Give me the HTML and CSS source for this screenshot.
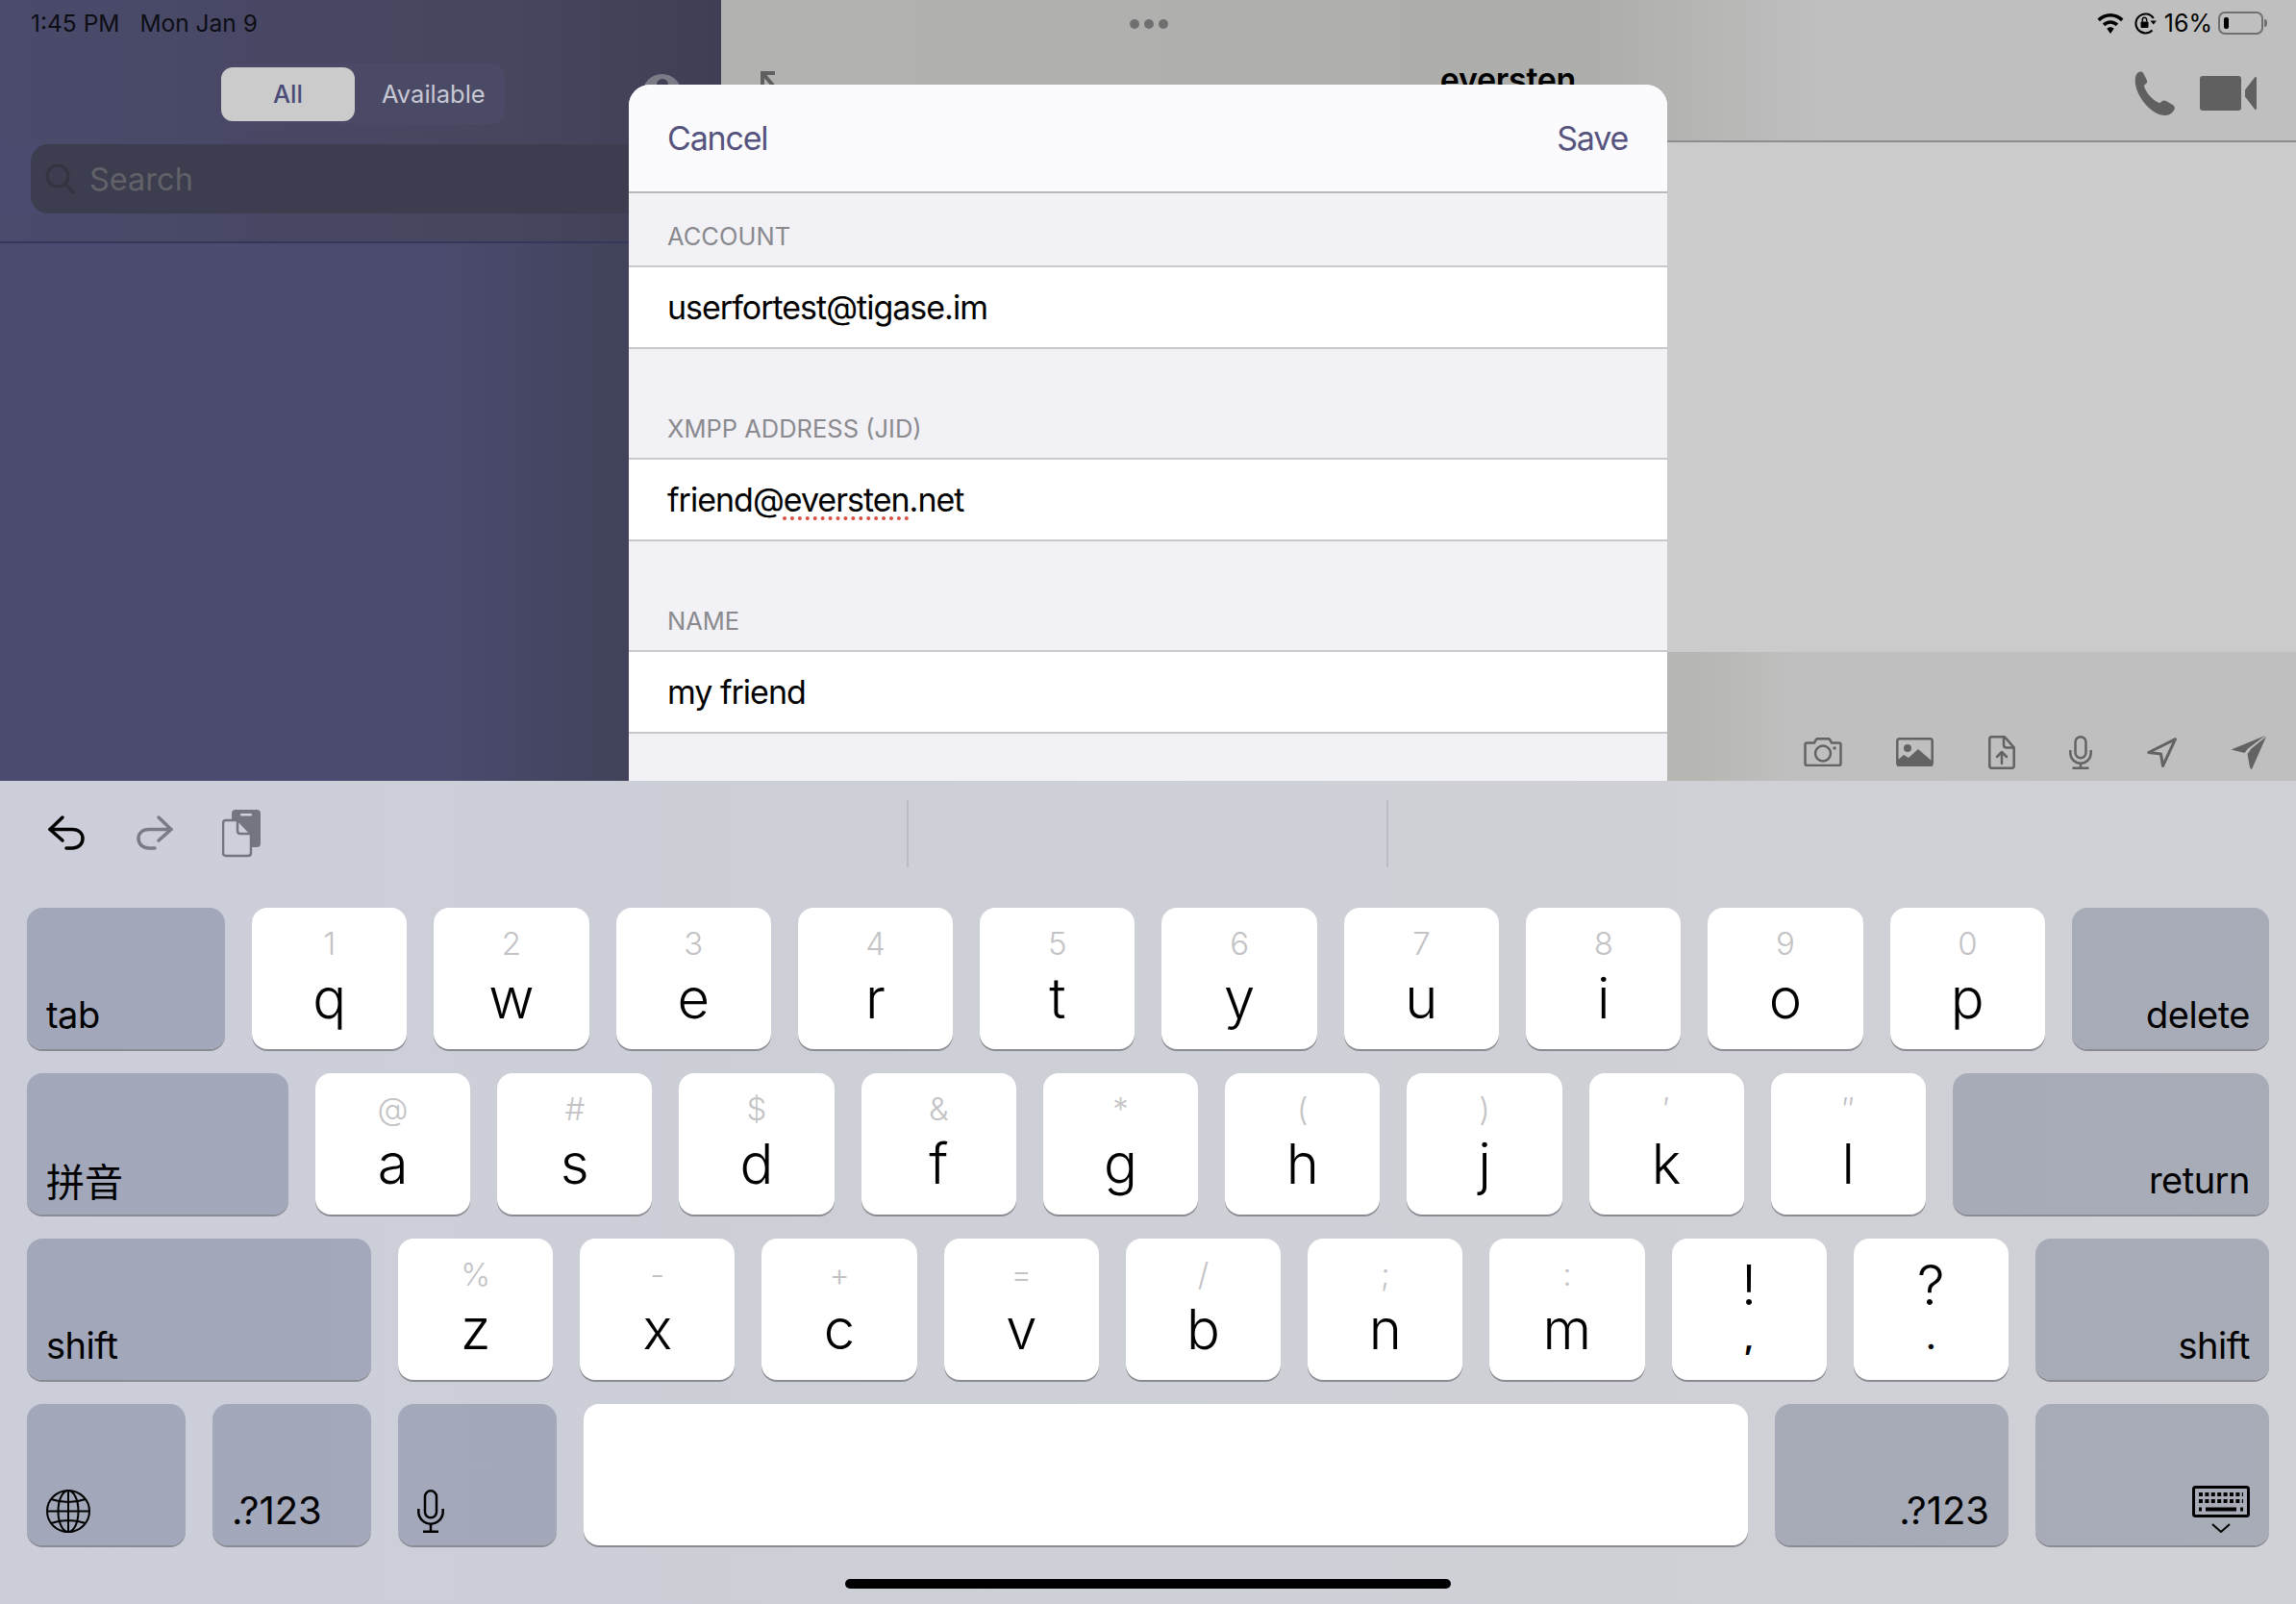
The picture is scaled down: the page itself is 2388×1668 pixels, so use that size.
FILE: index.html
```html
<!DOCTYPE html>
<html lang="en">
  <head>
    <meta charset="UTF-8" />
    <title>Add contact</title>
    <link rel="stylesheet" href="styles.css">
  </head>

  <body>
    <div class="app">
      <aside class="sidebar">
        <div class="status status-left">
          <span>1:45 PM</span>
          <span>Mon Jan 9</span>
        </div>
        <div class="segments">
          <div class="segment-track">
            <span class="segment active">All</span>
            <span class="segment">Available</span>
          </div>
        </div>
        <div class="add-btn"><i></i></div>
        <div class="search">
          <svg width="32" height="32" viewBox="0 0 32 32" fill="none" stroke="#33343f" stroke-width="3">
            <circle cx="13" cy="13" r="11" />
            <path d="M21 21l9 10" stroke-linecap="round" />
          </svg>
          <span>Search</span>
        </div>
        <div class="sidebar-line"></div>
      </aside>

      <main class="chat">
        <div class="status status-right">
          <div class="dots"><i></i><i></i><i></i></div>
          <div class="status-icons">
            <svg width="28" height="21" viewBox="0 0 28 21" fill="#000">
              <path d="M14 0C8.800 0 4 2.100 0.500 5.600L3 8.200C5.900 5.300 9.800 3.600 14 3.600s8.100 1.700 11 4.600l2.500-2.600C24 2.100 19.200 0 14 0z" />
              <path d="M14 7.200c-3.200 0-6.100 1.300-8.200 3.400l2.600 2.600c1.400-1.500 3.400-2.400 5.600-2.400s4.200 0.900 5.600 2.400l2.600-2.600C20.100 8.500 17.200 7.200 14 7.200z" />
              <path d="M14 14.300c-1.500 0-2.800 0.600-3.700 1.500L14 21l3.700-5.200c-0.900-0.900-2.200-1.500-3.700-1.500z" />
            </svg>
            <svg width="25" height="24" viewBox="0 0 25 24" fill="none" stroke="#000" stroke-width="2">
              <path d="M19.500 19.500A10 10 0 1 1 20.800 7" />
              <path d="M24 9.500h-6.500l3.200 4z" fill="#000" stroke="none" />
              <rect x="7.500" y="10.500" width="8" height="6.500" rx="1" fill="#000" stroke="none" />
              <path d="M9.300 10.500V8.500a2.200 2.200 0 0 1 4.400 0v2" stroke-width="1.500" />
            </svg>
            <span class="percent">16%</span>
            <div class="battery"><i></i></div>
            <div class="battery-tip"></div>
          </div>
        </div>

        <div class="chat-nav">
          <svg class="back" width="24" height="24" viewBox="0 0 24 24" fill="none" stroke="#5f5f5f" stroke-width="4">
            <path d="M3 16V2h13M3 2l18 21" />
          </svg>
          <div class="title">eversten</div>
          <div class="nav-icons">
            <svg width="47" height="46" viewBox="0 0 43 45" fill="#606060">
              <path d="M3 1.500c2-1.500 4.500-1.500 5.500 0.500l3.500 7c0.700 1.500 0.300 3-1 4l-2 1.800c1.500 4 3.500 7.500 6.500 10.800 3 3.200 6 5.500 9.700 7l2.300-2c1.200-1 2.800-1.200 4.200-0.300l7 4.300c2 1.200 2.200 3.800 0.600 5.800-2 2.600-5 4.800-8.800 4.600C24 45 17 41 10.500 33.500 4 26 0.500 17.500 0.200 10.500 0 6.500 1 3.300 3 1.500z" />
            </svg>
            <svg width="59" height="36" viewBox="0 0 59 36" fill="#606060">
              <rect x="0" y="0" width="43" height="36" rx="3" />
              <path d="M47 14.500L57 1.500c0.800-1 2-0.500 2 0.800v31.400c0 1.300-1.200 1.800-2 0.800L47 21.500z" />
            </svg>
          </div>
        </div>

        <div class="messages"></div>

        <div class="composer">
          <svg width="40" height="30" viewBox="0 0 40 30" fill="none" stroke="#636363" stroke-width="2.500">
            <path d="M3.500 5.500h7.500l2-3.500q0.500-0.800 1.500-0.800h11q1 0 1.500 0.800l2 3.500h7.500q2 0 2 2v19.500q0 2-2 2h-33q-2 0-2-2V7.500q0-2 2-2z" />
            <circle cx="20" cy="16.500" r="8" />
            <circle cx="32" cy="11" r="1.700" fill="#636363" stroke="none" />
          </svg>
          <svg width="39" height="30" viewBox="0 0 39 30" fill="none" stroke="#636363" stroke-width="2.500">
            <rect x="1.300" y="1.300" width="36.400" height="27.400" rx="2.500" />
            <circle cx="12" cy="11" r="4" fill="#636363" stroke="none" />
            <path d="M1 28V24l7-6 5 3 10-9 15 13v4q0 1-1 1H2q-1 0-1-1z" fill="#636363" stroke="none" />
          </svg>
          <svg width="28" height="35" viewBox="0 0 28 35" fill="none" stroke="#636363" stroke-width="2.500" stroke-linejoin="round">
            <path d="M3.500 1.300h13.500l9.700 11v19q0 2.400-2.400 2.400H3.500q-2.200 0-2.200-2.400V3.700q0-2.400 2.200-2.400z" />
            <path d="M16 1.500v8q0 3 3 3h7.500" />
            <path d="M14 29V17.500M9 22l5-5 5 5" stroke-linecap="round" />
          </svg>
          <svg width="24" height="35" viewBox="0 0 24 35" fill="none" stroke="#636363" stroke-width="2.500">
            <rect x="6.500" y="1.300" width="11" height="22" rx="5.500" />
            <path d="M1.300 15v3a10.700 10.700 0 0 0 21.400 0v-3" />
            <path d="M12 28.500v5M3.500 33.700h17" />
          </svg>
          <svg width="31" height="31" viewBox="0 0 31 31" fill="none" stroke="#636363" stroke-width="3" stroke-linejoin="round">
            <path d="M1.700 15.500L29.500 1.700 16.500 29.500 14.500 17z" />
          </svg>
          <svg width="37" height="35" viewBox="0 0 37 35" fill="#636363">
            <path d="M0.500 14.500L36 0 18 13.500 14.500 18z" />
            <path d="M37 1L22 35q-1 0-2-2l-2.500-14 4-5.500z" />
          </svg>
        </div>
      </main>

      <div class="modal">
        <div class="modal-head">
          <span>Cancel</span>
          <span>Save</span>
        </div>
        <div class="field-label first">ACCOUNT</div>
        <div class="field">userfortest@tigase.im</div>
        <div class="field-label">XMPP ADDRESS (JID)</div>
        <div class="field">friend@<span class="misspelt">eversten</span>.net</div>
        <div class="field-label">NAME</div>
        <div class="field">my friend</div>
      </div>
    </div>

    <div class="keyboard">
      <div class="toolbar">
        <div class="tool-icons">
          <svg class="undo" width="40" height="40" viewBox="0 0 40 40" fill="none" stroke="#000" stroke-width="3.500" stroke-linecap="round" stroke-linejoin="round">
            <path d="M16 3L3 15.500 16 27" />
            <path d="M3 15.500h23c7 0 11 4 11 9.500s-4 10-11 10h-6" />
          </svg>
          <svg class="redo" width="40" height="40" viewBox="0 0 40 40" fill="none" stroke="#7a7b84" stroke-width="3.500" stroke-linecap="round" stroke-linejoin="round">
            <path d="M24 3L37 15.500 24 27" />
            <path d="M37 15.500H14C7 15.500 3 19.500 3 25s4 10 11 10h6" />
          </svg>
          <svg class="paste" width="41" height="50" viewBox="0 0 41 50" fill="none">
            <rect x="10" y="0" width="30" height="39" rx="4" fill="#74757f" />
            <rect x="19" y="4" width="12" height="2.500" rx="1" fill="#cdcfd9" />
            <path d="M4 11h12.500L30 25v20q0 3-3 3H4q-3 0-3-3V14q0-3 3-3z" fill="#cdcfd9" stroke="#74757f" stroke-width="2.500" stroke-linejoin="round" />
            <path d="M16 12v10q0 3 3 3h10" stroke="#74757f" stroke-width="2.500" />
          </svg>
        </div>
        <div class="tool-sep"></div>
        <div class="tool-gap"></div>
        <div class="tool-sep"></div>
      </div>

      <div class="row">
        <div class="key dark tab"><span class="side-label">tab</span></div>
        <div class="key"><small>1</small><b>q</b></div>
        <div class="key"><small>2</small><b>w</b></div>
        <div class="key"><small>3</small><b>e</b></div>
        <div class="key"><small>4</small><b>r</b></div>
        <div class="key"><small>5</small><b>t</b></div>
        <div class="key"><small>6</small><b>y</b></div>
        <div class="key"><small>7</small><b>u</b></div>
        <div class="key"><small>8</small><b>i</b></div>
        <div class="key"><small>9</small><b>o</b></div>
        <div class="key"><small>0</small><b>p</b></div>
        <div class="key dark delete right"><span class="side-label">delete</span></div>
      </div>

      <div class="row">
        <div class="key dark pinyin"><span class="side-label cjk">拼音</span></div>
        <div class="key"><small>@</small><b>a</b></div>
        <div class="key"><small>#</small><b>s</b></div>
        <div class="key"><small>$</small><b>d</b></div>
        <div class="key"><small>&amp;</small><b>f</b></div>
        <div class="key"><small>*</small><b>g</b></div>
        <div class="key"><small>(</small><b>h</b></div>
        <div class="key"><small>)</small><b>j</b></div>
        <div class="key"><small>′</small><b>k</b></div>
        <div class="key"><small>″</small><b>l</b></div>
        <div class="key dark return right"><span class="side-label">return</span></div>
      </div>

      <div class="row">
        <div class="key dark shift-left"><span class="side-label">shift</span></div>
        <div class="key"><small>%</small><b>z</b></div>
        <div class="key"><small>-</small><b>x</b></div>
        <div class="key"><small>+</small><b>c</b></div>
        <div class="key"><small>=</small><b>v</b></div>
        <div class="key"><small>/</small><b>b</b></div>
        <div class="key"><small>;</small><b>n</b></div>
        <div class="key"><small>:</small><b>m</b></div>
        <div class="key punct"><em>!</em><b>,</b></div>
        <div class="key punct"><em>?</em><b>.</b></div>
        <div class="key dark shift-right right"><span class="side-label">shift</span></div>
      </div>

      <div class="row">
        <div class="key dark small-key icon-key">
          <svg width="46" height="45" viewBox="0 0 46 45" fill="none" stroke="#000" stroke-width="2">
            <ellipse cx="23" cy="22.500" rx="22" ry="21.500" />
            <ellipse cx="23" cy="22.500" rx="10.500" ry="21.500" />
            <path d="M23 1v43M1 22.500h44M5 10q18 6 36 0M5 35q18-6 36 0" />
          </svg>
        </div>
        <div class="key dark small-key"><span class="side-label digits">.?123</span></div>
        <div class="key dark small-key icon-key">
          <svg width="28" height="45" viewBox="0 0 28 45" fill="none" stroke="#000" stroke-width="2.500">
            <rect x="8" y="1.300" width="12" height="28" rx="6" />
            <path d="M1.300 20v3a12.700 12.700 0 0 0 25.400 0v-3" />
            <path d="M14 36v7.500M6 43.700h16" />
          </svg>
        </div>
        <div class="key space"></div>
        <div class="key dark wide-key right"><span class="side-label digits">.?123</span></div>
        <div class="key dark wide-key right icon-key">
          <svg width="60" height="49" viewBox="0 0 60 49" fill="none" stroke="#000" stroke-width="3">
            <rect x="1.500" y="1.500" width="57" height="30" rx="2" />
            <path d="M7 9h46M7 16h46" stroke-width="4" stroke-dasharray="4 2.400" />
            <path d="M14 24.500h32M7 24.500h3M50 24.500h3" stroke-width="4" />
            <path d="M21 40l9 8 9-8" stroke-width="2" />
          </svg>
        </div>
      </div>

      <div class="home-bar"></div>
    </div>
  </body>
</html>
```

FILE: styles.css
```css
* {
  margin: 0;
  padding: 0;
  box-sizing: border-box;
}

body {
  width: 2388px;
  height: 1668px;
  overflow: hidden;
  font-family: Inter, "Liberation Sans", sans-serif;
  color: #000;
}

svg {
  display: block;
  flex-shrink: 0;
}

/* top part, dimmed behind the sheet */

.app {
  position: relative;
  display: flex;
  height: 812px;
  overflow: hidden;
}

.sidebar {
  position: relative;
  width: 750px;
  background: linear-gradient(90deg, #4b4b6f 0%, #4b4b6f 60%, #42435c 85%, #3e3f55 100%);
}

.status {
  height: 48px;
  font-size: 24.500px;
  display: flex;
  align-items: center;
}

.status-left {
  gap: 21px;
  padding-left: 32px;
  color: #0d0d14;
  background: linear-gradient(90deg, #4a4a6c 0%, #46465f 70%, #3e3f54 100%);
}

.segments {
  height: 102px;
  padding: 18px 0 0 230px;
  background: linear-gradient(90deg, #4a4a6c 0%, #46465f 70%, #3e3f54 100%);
}

.segment-track {
  display: flex;
  width: 295px;
  height: 63px;
  background: #4a4a66;
  border-radius: 14px;
  align-items: center;
}

.segment {
  font-size: 25.500px;
  text-align: center;
  color: #c8c8d4;
  padding-left: 28px;
}

.segment.active {
  width: 139px;
  height: 56px;
  line-height: 56px;
  padding: 0;
  background: #cbcbcb;
  color: #4b4b78;
  font-weight: 500;
  border-radius: 12px;
}

.add-btn {
  position: absolute;
  left: 668px;
  top: 77px;
  width: 41px;
  height: 41px;
  border-radius: 50%;
  background: #7b7b88;
}

.add-btn i {
  display: block;
  width: 12px;
  height: 12px;
  margin: 5px auto 0;
  border-radius: 50%;
  background: #3e3f52;
}

.search {
  display: flex;
  align-items: center;
  gap: 14px;
  height: 72px;
  padding-left: 15px;
  border-radius: 18px 0 0 18px;
  margin-left: 32px;
  background: #3c3d4f;
  color: #616168;
  font-size: 32.500px;
}

.sidebar-line {
  height: 31px;
  border-bottom: 2px solid #35365a;
  background: linear-gradient(90deg, #4a4a6c 0%, #46465f 70%, #3e3f54 100%);
}

.chat {
  flex: 1;
  display: flex;
  flex-direction: column;
  background: #cbcbcb;
}

.status-right {
  position: relative;
  justify-content: flex-end;
  padding-right: 30px;
  background: linear-gradient(90deg, #b2b3b0 0%, #adaeab 55%, #bfbfbf 70%);
}

.dots {
  position: absolute;
  left: 425px;
  top: 20px;
  display: flex;
  gap: 5px;
}

.dots i {
  width: 10px;
  height: 10px;
  border-radius: 50%;
  background: #6f6f6f;
}

.status-icons {
  display: flex;
  align-items: center;
}

.percent {
  margin: 0 6px 0 7px;
  font-size: 25px;
}

.status-icons svg:first-child {
  margin-right: 10px;
}

.battery {
  width: 47px;
  height: 24px;
  padding: 4px;
  border: 2px solid #707070;
  border-radius: 7px;
}

.battery i {
  display: block;
  width: 5px;
  height: 12px;
  background: #000;
  border-radius: 2px;
}

.battery-tip {
  width: 3px;
  height: 8px;
  margin-left: 1px;
  background: #707070;
  border-radius: 0 3px 3px 0;
}

.chat-nav {
  display: grid;
  grid-template-columns: 1fr auto 1fr;
  height: 100px;
  padding: 26px 41px 0 40px;
  border-bottom: 2px solid #8e8e8e;
  background: linear-gradient(90deg, #b2b3b0 0%, #adaeab 55%, #bfbfbf 70%);
}

.title {
  margin-top: -8px;
  font-size: 34px;
  font-weight: 600;
  line-height: 34px;
  letter-spacing: -0.300px;
}

.nav-icons {
  display: flex;
  justify-content: flex-end;
  align-items: flex-start;
  gap: 22px;
}

.nav-icons svg:last-child {
  margin-top: 5px;
}

.messages {
  flex: 1;
}

.composer {
  height: 134px;
  display: flex;
  justify-content: flex-end;
  align-items: center;
  gap: 56.500px;
  padding: 74px 31px 0 0;
  background: linear-gradient(90deg, #b6b7b2 0%, #b6b7b2 62%, #bfbfbf 68%);
}

/* the sheet */

.modal {
  position: absolute;
  left: 654px;
  top: 88px;
  width: 1080px;
  height: 760px;
  background: #f1f1f6;
  border-radius: 22px 22px 0 0;
}

.modal-head {
  display: flex;
  justify-content: space-between;
  align-items: center;
  height: 113px;
  padding: 0 41px 0 40px;
  background: #fbfbfd;
  border-radius: 22px 22px 0 0;
  border-bottom: 2px solid #b9b9bd;
  color: #56547e;
  font-size: 34px;
  letter-spacing: -1.200px;
}

.field-label {
  height: 113px;
  padding: 0 40px 15px;
  display: flex;
  align-items: flex-end;
  color: #8a8a8e;
  font-size: 25.500px;
}

.field-label.first {
  height: 75px;
}

.field {
  height: 87px;
  padding: 0 40px;
  line-height: 84px;
  background: #fff;
  border-top: 2px solid #c8c8cc;
  border-bottom: 2px solid #c8c8cc;
  font-size: 34px;
  letter-spacing: -1px;
}

.misspelt {
  text-decoration: underline dotted #d9503f 4px;
  text-underline-offset: 5px;
}

/* keyboard */

.keyboard {
  height: 856px;
  background: linear-gradient(90deg, #cbcdd9 0%, #ced0d7 45%, #cfd1d6 100%);
}

.toolbar {
  display: flex;
  height: 132px;
  padding: 20px 0 0 49px;
}

.tool-icons {
  width: 894px;
  height: 70px;
  display: flex;
  align-items: center;
}

.undo {
  margin-right: 52px;
}

.redo {
  margin-right: 50px;
}

.tool-sep {
  width: 2px;
  height: 70px;
  background: #bbbdc5;
}

.tool-gap {
  width: 497px;
}

.row {
  display: flex;
  gap: 28px;
  height: 147px;
  margin: 0 28px 25px;
}

.key {
  flex: 1;
  position: relative;
  display: flex;
  flex-direction: column;
  align-items: center;
  background: #fff;
  border-radius: 16px;
  box-shadow: 0 2px 0 #8b8c93;
  overflow: hidden;
}

.key small {
  height: 44px;
  margin-top: 15px;
  line-height: 44px;
  font-size: 33px;
  font-weight: 300;
  color: #c3c3c6;
}

.key b {
  height: 70px;
  line-height: 70px;
  font-size: 58px;
  font-weight: 300;
}

.key em {
  height: 44px;
  margin-top: 27px;
  line-height: 44px;
  font-size: 57px;
  font-style: normal;
  font-weight: 300;
}

.key.punct b {
  height: 32px;
  margin-top: 17px;
  line-height: 32px;
  font-size: 32px;
  font-weight: 700;
}

.key.dark {
  flex: none;
  background: linear-gradient(90deg, #a2a7ba 0%, #a5a9b9 50%, #a8acb7 100%) fixed;
  justify-content: flex-end;
  align-items: flex-start;
  padding: 0 20px 14px;
}

.key.right {
  align-items: flex-end;
}

.side-label {
  font-size: 38px;
  line-height: 44px;
  font-weight: 400;
  letter-spacing: -0.500px;
}

.side-label.digits {
  font-size: 40px;
  letter-spacing: 0;
}

.cjk {
  font-family: "Noto Sans CJK SC", sans-serif;
  font-size: 40px;
  letter-spacing: 0;
}

.key.dark.icon-key {
  padding-bottom: 13px;
}

.tab {
  width: 206px;
}

.delete {
  width: 205px;
}

.pinyin {
  width: 272px;
}

.return {
  width: 329px;
}

.shift-left {
  width: 358px;
}

.shift-right {
  width: 243px;
}

.key.small-key {
  width: 165px;
}

.key.wide-key {
  width: 243px;
}

.home-bar {
  width: 630px;
  height: 10px;
  margin: 35px auto 0;
  background: #000;
  border-radius: 5px;
}
```
